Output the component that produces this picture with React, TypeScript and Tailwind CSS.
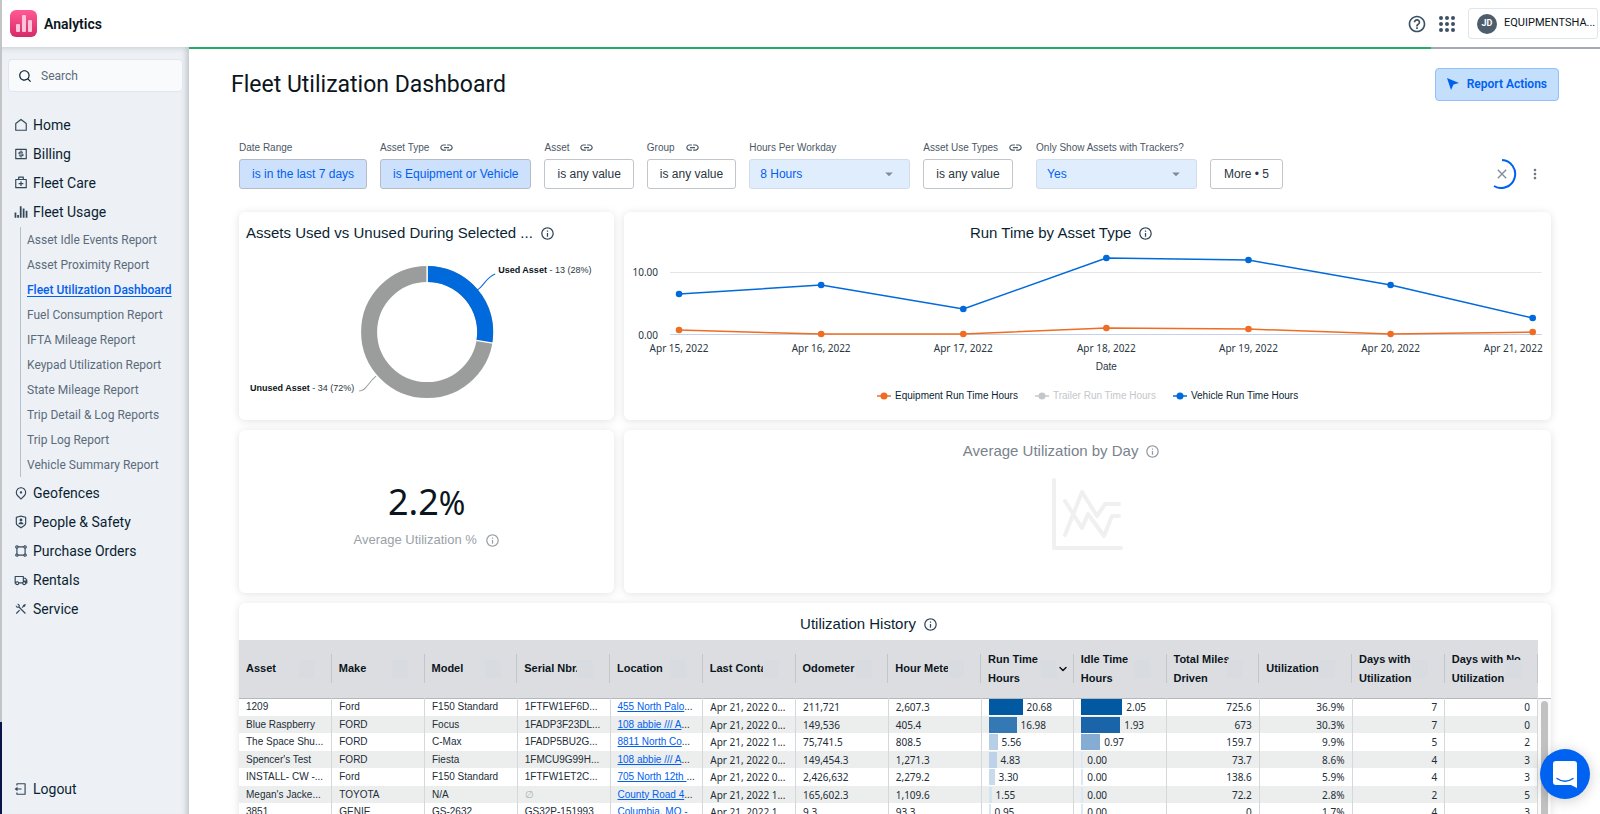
import type { ReactNode } from "react"

import { MdArrowDropDown, MdClose, MdHelpOutline, MdInfoOutline, MdLink, MdMoreVert } from "react-icons/md"
import {
  RiFirstAidKitLine,
  RiLogoutBoxLine,
  RiMapPin2Line,
  RiMoneyDollarBoxLine,
  RiSearchLine,
  RiShapeLine,
  RiShieldUserLine,
  RiToolsLine,
  RiTruckLine,
} from "react-icons/ri"
import { ChevronDown } from "lucide-react"

const reports = [
  "Asset Idle Events Report",
  "Asset Proximity Report",
  "Fleet Utilization Dashboard",
  "Fuel Consumption Report",
  "IFTA Mileage Report",
  "Keypad Utilization Report",
  "State Mileage Report",
  "Trip Detail & Log Reports",
  "Trip Log Report",
  "Vehicle Summary Report",
]

const columns = [
  "Asset",
  "Make",
  "Model",
  "Serial Nbr.",
  "Location",
  "Last Contact",
  "Odometer",
  "Hour Meter",
  "Run Time\nHours",
  "Idle Time\nHours",
  "Total Miles\nDriven",
  "Utilization",
  "Days with\nUtilization",
  "Days with No\nUtilization",
]

interface Bar {
  value: string
  width: number
  color: string
}

interface Row {
  text: string[]
  location: string
  meters: string[]
  run: Bar
  idle: Bar
  totals: string[]
}

const noIdle: Bar = { value: "0.00", width: 2, color: "#dce8f6" }

const rows: Row[] = [
  {
    text: ["1209", "Ford", "F150 Standard", "1FTFW1EF6D..."],
    location: "455 North Palo",
    meters: ["Apr 21, 2022 0...", "211,721", "2,607.3"],
    run: { value: "20.68", width: 34, color: "#0059a1" },
    idle: { value: "2.05", width: 41, color: "#0059a1" },
    totals: ["725.6", "36.9%", "7", "0"],
  },
  {
    text: ["Blue Raspberry", "FORD", "Focus", "1FADP3F23DL..."],
    location: "108 abbie /// A",
    meters: ["Apr 21, 2022 0...", "149,536", "405.4"],
    run: { value: "16.98", width: 28, color: "#3478b4" },
    idle: { value: "1.93", width: 39, color: "#1a65a9" },
    totals: ["673", "30.3%", "7", "0"],
  },
  {
    text: ["The Space Shu...", "FORD", "C-Max", "1FADP5BU2G..."],
    location: "8811 North Co",
    meters: ["Apr 21, 2022 1...", "75,741.5", "808.5"],
    run: { value: "5.56", width: 9, color: "#b7cfe6" },
    idle: { value: "0.97", width: 19, color: "#85acd2" },
    totals: ["159.7", "9.9%", "5", "2"],
  },
  {
    text: ["Spencer's Test", "FORD", "Fiesta", "1FMCU9G99H..."],
    location: "108 abbie /// A",
    meters: ["Apr 21, 2022 0...", "149,454.3", "1,271.3"],
    run: { value: "4.83", width: 8, color: "#bed3e9" },
    idle: noIdle,
    totals: ["73.7", "8.6%", "4", "3"],
  },
  {
    text: ["INSTALL- CW -...", "Ford", "F150 Standard", "1FTFW1ET2C..."],
    location: "705 North 12th ",
    meters: ["Apr 21, 2022 0...", "2,426,632", "2,279.2"],
    run: { value: "3.30", width: 6, color: "#c8daec" },
    idle: noIdle,
    totals: ["138.6", "5.9%", "4", "3"],
  },
  {
    text: ["Megan's Jacke...", "TOYOTA", "N/A", "∅"],
    location: "County Road 4",
    meters: ["Apr 21, 2022 1...", "165,602.3", "1,109.6"],
    run: { value: "1.55", width: 3, color: "#d5e4f3" },
    idle: noIdle,
    totals: ["72.2", "2.8%", "2", "5"],
  },
  {
    text: ["3851", "GENIE", "GS-2632", "GS32P-151993"],
    location: "Columbia, MO -",
    meters: ["Apr 21, 2022 1...", "9.3", "93.3"],
    run: { value: "0.95", width: 2, color: "#d9e7f5" },
    idle: noIdle,
    totals: ["0", "1.7%", "4", "3"],
  },
]

const days = [
  { x: 55, label: "Apr 15, 2022", vehicle: 46, equipment: 82 },
  { x: 197, label: "Apr 16, 2022", vehicle: 37, equipment: 86 },
  { x: 339, label: "Apr 17, 2022", vehicle: 61, equipment: 86 },
  { x: 482, label: "Apr 18, 2022", vehicle: 10, equipment: 80 },
  { x: 624, label: "Apr 19, 2022", vehicle: 12, equipment: 81 },
  { x: 766, label: "Apr 20, 2022", vehicle: 37, equipment: 86 },
  { x: 908, label: "Apr 21, 2022", vehicle: 70, equipment: 84 },
]

function HomeIcon() {
  return (
    <svg viewBox="0 0 24 24" className="w-3.5 h-3.5" fill="none" stroke="currentColor" strokeWidth="2">
      <path d="M3 21V9.5L12 2.5l9 7V21z" strokeLinejoin="round" />
    </svg>
  )
}

function UsageIcon() {
  return (
    <svg viewBox="0 0 24 24" className="w-3.5 h-3.5" fill="none" stroke="currentColor" strokeWidth="3">
      <path d="M2.500 22V13M7 22v-5M11.500 22V2M16.500 22V6M21.500 22V10" />
    </svg>
  )
}

function NavItem({ icon, label }: { icon: ReactNode; label: string }) {
  return (
    <a href="#" className="flex items-center gap-[5px] h-[29px] text-sm text-[#0b1f33]">
      <span className="w-3.5 text-sm text-[#33475b]">{icon}</span>
      {label}
    </a>
  )
}

function Sidebar() {
  return (
    <nav className="flex flex-col shrink-0 w-[187px] bg-[#edf1f5] shadow-[inset_-5px_3px_6px_-3px_rgba(60,75,90,0.3)]">
      <label className="flex items-center gap-[9px] h-[33px] mt-3 ml-[6px] mr-[6px] px-[9px] rounded bg-[#f8fafc] border border-[#e0e5f0]">
        <RiSearchLine className="w-3.5 h-3.5 shrink-0 text-[#0b1f33]" />
        <input
          type="text"
          aria-label="Search"
          placeholder="Search"
          className="w-full min-w-0 bg-transparent text-xs outline-none placeholder:text-[#5b6b7b]"
        />
      </label>

      <div className="flex flex-col mt-[18px] pl-3">
        <NavItem icon={<HomeIcon />} label="Home" />
        <NavItem icon={<RiMoneyDollarBoxLine />} label="Billing" />
        <NavItem icon={<RiFirstAidKitLine />} label="Fleet Care" />
        <NavItem icon={<UsageIcon />} label="Fleet Usage" />
        <ul className="ml-[6px] my-px pl-[6px] border-l border-[#b4c3cd]">
          {reports.map((report) => (
            <li key={report} className="flex items-center h-[25px] text-xs whitespace-nowrap">
              {report === "Fleet Utilization Dashboard" ? (
                <a href="#" aria-current="page" className="font-medium text-[#0060f0] underline underline-offset-2">
                  {report}
                </a>
              ) : (
                <a href="#" className="text-[#5b6b7b]">
                  {report}
                </a>
              )}
            </li>
          ))}
        </ul>
        <NavItem icon={<RiMapPin2Line />} label="Geofences" />
        <NavItem icon={<RiShieldUserLine />} label="People & Safety" />
        <NavItem icon={<RiShapeLine />} label="Purchase Orders" />
        <NavItem icon={<RiTruckLine />} label="Rentals" />
        <NavItem icon={<RiToolsLine />} label="Service" />
      </div>

      <div className="mt-auto pl-3 pb-[11px]">
        <NavItem icon={<RiLogoutBoxLine />} label="Logout" />
      </div>
    </nav>
  )
}

function Header() {
  return (
    <header className="flex items-center shrink-0 h-[47px] pl-2 pr-[2px] bg-white">
      <svg viewBox="0 0 27 27" className="w-[27px] h-[27px]">
        <defs>
          <linearGradient id="logo" x1="0" y1="0" x2="0" y2="1">
            <stop offset="0" stopColor="#ff5a93" />
            <stop offset="1" stopColor="#d62a68" />
          </linearGradient>
        </defs>
        <rect width="27" height="27" rx="6" fill="url(#logo)" />
        <rect x="6" y="14" width="4" height="8" rx="1" fill="#ffc4da" />
        <rect x="12" y="5" width="4" height="17" rx="1" fill="#ffc4da" />
        <rect x="18" y="10" width="4" height="12" rx="1" fill="#ffc4da" />
      </svg>
      <span className="ml-[7px] text-sm font-semibold text-[#0b1520]">Analytics</span>

      <div className="flex items-center ml-auto">
        <button aria-label="Help" className="text-xl text-[#3d5163]">
          <MdHelpOutline />
        </button>
        <button aria-label="Apps" className="ml-3">
          <svg viewBox="0 0 16 16" className="w-4 h-4" fill="#3d5163">
            {[2, 8, 14].map((y) => [2, 8, 14].map((x) => <circle key={`${x}-${y}`} cx={x} cy={y} r="2" />))}
          </svg>
        </button>
        <button className="flex items-center gap-[7px] w-[130px] h-[31px] ml-[13px] pl-2 rounded-[3px] border border-[#dfe5ea]">
          <span className="flex items-center justify-center shrink-0 w-5 h-5 rounded-full bg-[#4d5d6c] text-white text-[9px] font-bold">
            JD
          </span>
          <span className="text-[11px] text-[#0b1520]">EQUIPMENTSHA...</span>
        </button>
      </div>
    </header>
  )
}

interface FilterProps {
  label: string
  value: string
  linked?: boolean
  active?: boolean
}

function FilterLabel({ label, linked }: { label: string; linked?: boolean }) {
  return (
    <span className="flex items-center gap-[10px] h-4 text-[10px] text-[#4b5866] whitespace-nowrap">
      {label}
      {linked && <MdLink className="w-[15px] h-[15px]" />}
    </span>
  )
}

function FilterButton({ label, value, linked, active }: FilterProps) {
  return (
    <label className="flex flex-col items-start gap-[4px]">
      <FilterLabel label={label} linked={linked} />
      <button
        className={
          active
            ? "h-[30px] px-3 rounded-[3px] border border-[#b6bcc4] bg-[#cde1fc] text-xs text-[#0060f0] whitespace-nowrap"
            : "h-[30px] px-3 rounded-[3px] border border-[#c1c6cc] bg-white text-xs text-[#2a3642] whitespace-nowrap"
        }
      >
        {value}
      </button>
    </label>
  )
}

function FilterSelect({ label, value }: FilterProps) {
  return (
    <label className="flex flex-col gap-[4px]">
      <FilterLabel label={label} />
      <span className="relative">
        <select className="appearance-none block w-[161px] h-[30px] px-[10px] rounded-[3px] border border-[#d3dbe6] bg-[#e0edfd] text-xs text-[#0060f0]">
          <option>{value}</option>
        </select>
        <MdArrowDropDown className="absolute right-3 top-[6px] w-[18px] h-[18px] text-[#7f8b97] pointer-events-none" />
      </span>
    </label>
  )
}

function Filters() {
  return (
    <div className="flex items-end gap-[13px] pl-[50px] pr-[57px] mt-[38px]">
      <FilterButton label="Date Range" value="is in the last 7 days" active />
      <FilterButton label="Asset Type" value="is Equipment or Vehicle" linked active />
      <FilterButton label="Asset" value="is any value" linked />
      <FilterButton label="Group" value="is any value" linked />
      <FilterSelect label="Hours Per Workday" value="8 Hours" />
      <FilterButton label="Asset Use Types" value="is any value" linked />
      <FilterSelect label="Only Show Assets with Trackers?" value="Yes" />
      <button className="h-[30px] px-[13px] rounded-[3px] border border-[#c1c6cc] bg-white text-xs text-[#2a3642] whitespace-nowrap">
        More • 5
      </button>
      <div className="flex items-center gap-[10px] h-[30px] ml-auto">
        <button aria-label="Cancel" className="relative flex items-center justify-center w-[30px] h-[30px]">
          <svg viewBox="0 0 30 30" className="absolute inset-0" fill="none" stroke="#0060f0" strokeWidth="2">
            <path d="M15 1a14 14 0 1 1-8 26" />
          </svg>
          <MdClose className="w-4 h-4 text-[#7f8b97]" />
        </button>
        <button aria-label="Dashboard actions" className="text-base text-[#6b7783]">
          <MdMoreVert />
        </button>
      </div>
    </div>
  )
}

function Card({ children, muted, title }: { children: ReactNode; muted?: boolean; title?: string }) {
  return (
    <section className="flex flex-col rounded-md bg-white shadow-[0_1px_8px_rgba(0,0,0,0.12)] overflow-hidden">
      {title && (
        <h2
          className={
            muted
              ? "flex items-center justify-center gap-[7px] h-[37px] pt-[6px] pr-[52px] text-[15px] text-[#78838e]"
              : "flex items-center justify-center gap-[7px] h-[37px] pt-[6px] pr-[52px] text-[15px] text-[#0b1f33]"
          }
        >
          {title}
          <MdInfoOutline className={muted ? "w-[15px] h-[15px] text-[#929ba4]" : "w-[15px] h-[15px] text-[#33475b]"} />
        </h2>
      )}
      {children}
    </section>
  )
}

function UsedVsUnused() {
  return (
    <section className="rounded-md bg-white shadow-[0_1px_8px_rgba(0,0,0,0.12)]">
      <h2 className="flex items-center gap-[7px] h-[37px] pt-[6px] pl-[7px] text-[15px] text-[#0b1f33] whitespace-nowrap">
        Assets Used vs Unused During Selected ...
        <MdInfoOutline className="w-[15px] h-[15px] text-[#33475b]" />
      </h2>
      <svg viewBox="0 0 375 171" className="block w-full">
        <g fill="none" strokeWidth="16">
          <circle cx="188" cy="83" r="58" stroke="#9b9d9c" />
          <path d="M188 25a58 58 0 0 1 57.2 67.7" stroke="#0069dc" />
        </g>
        <path d="M188 16v18M237 91.3l18 3" stroke="#fff" strokeWidth="1.5" />
        <path d="M238 41c7-4 9-13 18-16" fill="none" stroke="#0069dc" />
        <path d="M120 142c7 0 9-9 17-15" fill="none" stroke="#9b9d9c" />
        <g fontSize="9" fill="#2a3642">
          <text x="259" y="24">
            <tspan fontWeight="bold" fill="#0b1520">Used Asset</tspan> - 13 (28%)
          </text>
          <text x="11" y="142">
            <tspan fontWeight="bold" fill="#0b1520">Unused Asset</tspan> - 34 (72%)
          </text>
        </g>
      </svg>
    </section>
  )
}

function LegendItem({ label, color, off }: { label: string; color: string; off?: boolean }) {
  return (
    <li className={off ? "flex items-center gap-1 text-[#c4c7ca]" : "flex items-center gap-1 text-[#0b1f33]"}>
      <svg viewBox="0 0 14 8" className="w-3.5 h-2">
        <path d="M0 4h14" stroke={color} strokeWidth="1.5" />
        <circle cx="7" cy="4" r="3.5" fill={color} />
      </svg>
      {label}
    </li>
  )
}

function RunTimeChart() {
  return (
    <Card title="Run Time by Asset Type">
      <svg viewBox="0 0 926 124" className="block w-full font-['Noto_Sans',sans-serif]" fontSize="10" fill="#2a3642">
        <path d="M46 23.5h871" stroke="#e3e5e8" />
        <path d="M46 85.5h871" stroke="#c3d2ea" />
        <text x="34" y="27" textAnchor="end">10.00</text>
        <text x="34" y="90" textAnchor="end">0.00</text>
        <g transform="translate(0 -1)">
          <polyline points={days.map((d) => `${d.x},${d.vehicle}`).join(" ")} fill="none" stroke="#0069dc" strokeWidth="1.5" />
          <polyline points={days.map((d) => `${d.x},${d.equipment}`).join(" ")} fill="none" stroke="#ee6d23" strokeWidth="1.5" />
          {days.map((d) => (
            <g key={d.x}>
              <circle cx={d.x} cy={d.vehicle} r="3.3" fill="#0069dc" />
              <circle cx={d.x} cy={d.equipment} r="3.3" fill="#ee6d23" />
            </g>
          ))}
        </g>
        {days.map((d, i) => (
          <text key={d.x} x={i === 6 ? 918 : d.x} y="103" textAnchor={i === 6 ? "end" : "middle"}>
            {d.label}
          </text>
        ))}
        <text x="482" y="121" textAnchor="middle" className="font-['Liberation_Sans',sans-serif]">
          Date
        </text>
      </svg>
      <ul className="flex justify-center gap-[17px] mt-[15px] text-[10px] leading-4">
        <LegendItem label="Equipment Run Time Hours" color="#ee6d23" />
        <LegendItem label="Trailer Run Time Hours" color="#c4c7ca" off />
        <LegendItem label="Vehicle Run Time Hours" color="#0069dc" />
      </ul>
    </Card>
  )
}

function BarCell({ bar }: { bar: Bar }) {
  return (
    <td className="p-0 pl-[7px] border-r border-[#d5d8db]">
      <div className="flex items-center gap-1 h-4 font-['Noto_Sans',sans-serif]">
        <span className="h-4" style={{ width: bar.width, backgroundColor: bar.color }} />
        {bar.value}
      </div>
    </td>
  )
}

function HistoryTable() {
  return (
    <div className="flex">
      <table className="w-full min-w-0 table-fixed border-collapse text-[#222d38]">
        <thead className="bg-[#dcdde1]">
          <tr className="border-b border-[#b4b8be]">
            {columns.map((column) => (
              <th key={column} className="h-[58px] p-0 text-left text-[11px] leading-[19px] text-[#0b1520] whitespace-pre">
                <div className="relative flex items-center h-[29px] pl-[7px] border-r border-[#c2c5ca]">
                  <span className="block w-[66px]">{column}</span>
                  <span className="absolute left-[60px] w-[16px] h-[18px] bg-[#d8dce1]" />
                  {column === "Run Time\nHours" && <ChevronDown className="absolute right-1 w-3 h-3" strokeWidth={3} />}
                </div>
              </th>
            ))}
          </tr>
        </thead>
        <tbody className="text-[10px] leading-4 whitespace-nowrap">
          {rows.map((row) => (
            <tr key={row.text[0]} className="odd:h-[18px] even:h-[17px] even:bg-[#eceeed]">
              {row.text.map((text, i) => (
                <td
                  key={i}
                  className={
                    text === "∅"
                      ? "p-0 pl-[7px] border-r border-[#d5d8db] text-[#a9b0b7]"
                      : "p-0 pl-[7px] border-r border-[#d5d8db]"
                  }
                >
                  {text}
                </td>
              ))}
              <td className="p-0 pl-[7px] border-r border-[#d5d8db]">
                <a href="#" className="text-[#0060f0] underline">
                  {row.location}
                </a>
                {row.text[0] !== "3851" && "..."}
              </td>
              {row.meters.map((text) => (
                <td key={text} className="p-0 pl-[7px] border-r border-[#d5d8db] font-['Noto_Sans',sans-serif]">
                  {text}
                </td>
              ))}
              <BarCell bar={row.run} />
              <BarCell bar={row.idle} />
              {row.totals.map((text, i) => (
                <td key={i} className="p-0 pr-[7px] text-right border-r border-[#d5d8db] font-['Noto_Sans',sans-serif]">
                  {text}
                </td>
              ))}
            </tr>
          ))}
        </tbody>
      </table>
      <div className="shrink-0 w-[13px] mt-[58px] px-[3px] pt-[2px] border-t border-[#b4b8be] bg-[#fafafa]">
        <div className="h-full rounded-t bg-[#c1c1c1]" />
      </div>
    </div>
  )
}

export default function App() {
  return (
    <div className="flex h-screen overflow-hidden bg-white font-[Roboto,sans-serif]">
      <div className="flex flex-col shrink-0 w-[2px] bg-[#c3c4c6]">
        <div className="h-[92px] mt-auto bg-[#0a1446]" />
      </div>
      <div className="flex flex-col flex-1 min-w-0">
        <Header />
        <div className="flex flex-1 min-h-0">
          <Sidebar />
          <main className="flex-1 min-w-0 overflow-hidden font-['Liberation_Sans',Arial,sans-serif]">
            <div className="h-[2px] bg-[#a3aab3]">
              <div className="w-[88%] h-full bg-[#27ab68]" />
            </div>
            <div className="flex items-center justify-between pl-[42px] pr-[41px] mt-[18px] font-[Roboto,sans-serif]">
              <h1 className="pt-[2px] text-[23px] leading-8 text-[#0b1520]">Fleet Utilization Dashboard</h1>
              <button className="flex items-center gap-2 h-[33px] px-[11px] rounded border border-[#8fc0f7] bg-[#c3dffb] text-xs font-semibold text-[#0060f0]">
                <svg viewBox="0 0 12 12" className="w-3 h-3" fill="currentColor">
                  <path d="M0 0l12 5-5.500 1.500L4 12z" />
                </svg>
                Report Actions
              </button>
            </div>

            <Filters />

            <div className="grid grid-cols-[375fr_926fr] gap-[10px] mt-[23px] pl-[50px] pr-[49px]">
              <UsedVsUnused />
              <RunTimeChart />
              <Card>
                <div className="flex flex-col items-center justify-center h-[163px] pt-[6px]">
                  <p className="text-[36px] leading-[46px] font-['Noto_Sans',sans-serif] text-[#0b1520]">
                    2.2<span className="text-[32px]">%</span>
                  </p>
                  <p className="flex items-center gap-2 mt-1 text-[13px] leading-5 text-[#9aa1a8]">
                    Average Utilization %
                    <MdInfoOutline className="w-[15px] h-[15px]" />
                  </p>
                </div>
              </Card>
              <Card title="Average Utilization by Day" muted>
                <svg
                  viewBox="0 0 72 72"
                  className="w-[72px] h-[72px] mt-[11px] mx-auto"
                  fill="none"
                  stroke="#f0f0f0"
                  strokeWidth="4"
                  strokeLinecap="round"
                  strokeLinejoin="round"
                >
                  <path d="M2 2v68h67" />
                  <path d="M13 57l17-43 15 24 8-12h14" />
                  <path d="M13 23l17 27 6-14 16 22 8-20h7" />
                </svg>
              </Card>
              <div className="col-span-2">
                <Card title="Utilization History">
                  <HistoryTable />
                </Card>
              </div>
            </div>
          </main>
        </div>
      </div>

      <button
        aria-label="Open chat"
        className="fixed right-[10px] bottom-[15px] flex items-center justify-center w-[50px] h-[50px] rounded-full bg-[#0062f0] shadow-[0_2px_14px_rgba(0,0,0,0.2)]"
      >
        <svg viewBox="0 0 24 27" className="w-6 h-[27px]">
          <path d="M3 0h18a3 3 0 0 1 3 3v24l-6-3H3a3 3 0 0 1-3-3V3a3 3 0 0 1 3-3z" fill="#fff" />
          <path d="M4 17.500c5 3.500 11 3.500 16 0" fill="none" stroke="#0062f0" strokeWidth="1.500" strokeLinecap="round" />
        </svg>
      </button>
    </div>
  )
}
